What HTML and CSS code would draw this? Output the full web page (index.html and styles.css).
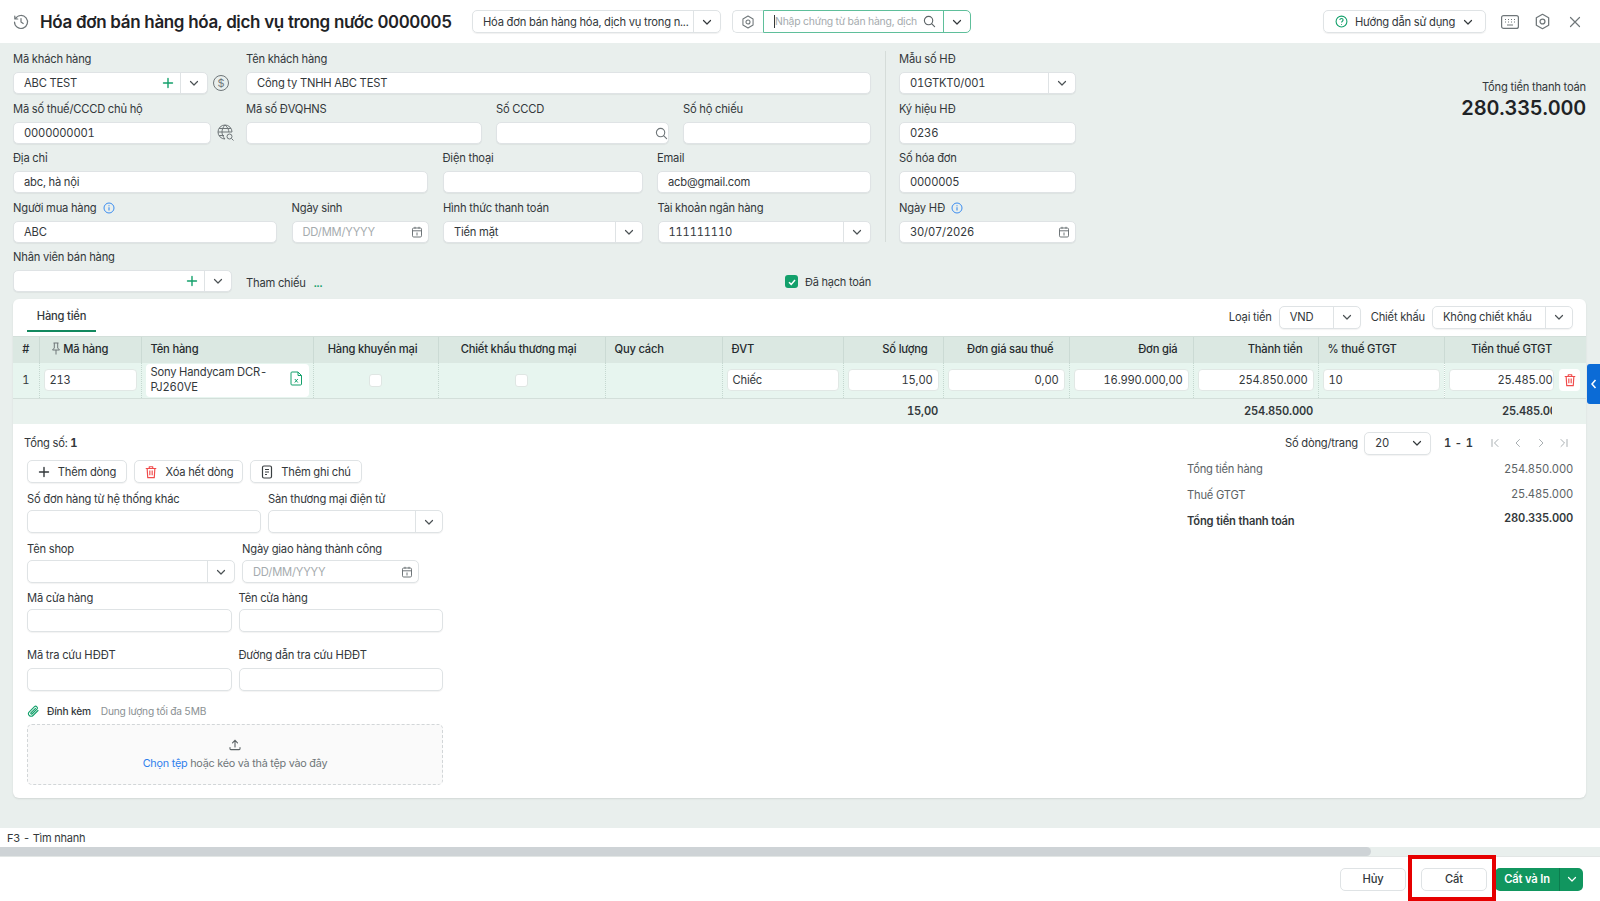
FILE: index.html
```html
<!DOCTYPE html>
<html lang="vi">
<head>
    <meta charset="UTF-8">
    <meta name="viewport" content="width=device-width, initial-scale=1.0">
    <title>Hóa đơn bán hàng hóa, dịch vụ trong nước 0000005</title>
    <link rel="stylesheet" href="styles.css">
</head>
<body>
    <svg class="sprite" xmlns="http://www.w3.org/2000/svg">
        <symbol id="i-chev" viewBox="0 0 12 12"><path d="M2.500 4.500 6 8l3.500-3.500" fill="none" stroke="currentColor" stroke-width="1.200" stroke-linecap="round" stroke-linejoin="round"/></symbol>
        <symbol id="i-plus" viewBox="0 0 12 12"><path d="M6 1.500v9M1.500 6h9" fill="none" stroke="currentColor" stroke-width="1.400" stroke-linecap="round"/></symbol>
        <symbol id="i-search" viewBox="0 0 14 14"><circle cx="6" cy="6" r="4.500" fill="none" stroke="currentColor" stroke-width="1.200"/><path d="m9.500 9.500 3 3" fill="none" stroke="currentColor" stroke-width="1.200" stroke-linecap="round"/></symbol>
        <symbol id="i-gear" viewBox="0 0 16 16"><path d="M8 1.200 13.800 4.500v7L8 14.800 2.200 11.500v-7z" fill="none" stroke="currentColor" stroke-width="1.200" stroke-linejoin="round"/><circle cx="8" cy="8" r="2.300" fill="none" stroke="currentColor" stroke-width="1.200"/></symbol>
        <symbol id="i-cal" viewBox="0 0 12 12"><rect x="1.500" y="2" width="9" height="9" rx="1.200" fill="none" stroke="currentColor"/><path d="M1.500 4.800h9M4 .8v2M8 .8v2M6 6.500v3" fill="none" stroke="currentColor"/></symbol>
        <symbol id="i-info" viewBox="0 0 12 12"><circle cx="6" cy="6" r="5" fill="none" stroke="currentColor"/><path d="M6 5.300v3.200M6 3.200v1" fill="none" stroke="currentColor" stroke-width="1.100"/></symbol>
        <symbol id="i-trash" viewBox="0 0 12 12"><path d="M1.500 3h9M4.500 3V1.500h3V3M2.700 3l.5 7.800h5.600l.5-7.800M5 4.800v4M7 4.800v4" fill="none" stroke="currentColor" stroke-linejoin="round"/></symbol>
    </svg>

    <div class="loading-bar"></div>

    <header class="topbar">
        <svg class="history" width="16" height="16" viewBox="0 0 16 16"><path d="M2.500 4.500A6.500 6.500 0 1 1 1.500 8M1.800 2v3h3M8 4.500V8l2.200 1.500" fill="none" stroke="#6f7679" stroke-width="1.200" stroke-linecap="round" stroke-linejoin="round"/></svg>
        <h1>Hóa đơn bán hàng hóa, dịch vụ trong nước 0000005</h1>
        <div class="box type-select">
            <span class="box-text">Hóa đơn bán hàng hóa, dịch vụ trong n...</span>
            <span class="box-arrow"><svg width="12" height="12"><use href="#i-chev"/></svg></span>
        </div>
        <div class="search-group">
            <span class="search-gear"><svg width="14" height="14"><use href="#i-gear"/></svg></span>
            <div class="search-box">
                <span class="caret"></span>
                <span class="search-text">Nhập chứng từ bán hàng, dịch</span>
                <svg class="search-icon" width="13" height="13"><use href="#i-search"/></svg>
                <span class="search-arrow"><svg width="12" height="12"><use href="#i-chev"/></svg></span>
            </div>
        </div>
        <div class="top-right">
            <div class="help-btn">
                <svg width="13" height="13" viewBox="0 0 12 12"><circle cx="6" cy="6" r="5" fill="none" stroke="#13a06b"/><path d="M4.500 4.700C4.500 3.700 5.200 3.200 6 3.200s1.500.5 1.500 1.400C7.500 5.700 6 5.800 6 7M6 8.200v.8" fill="none" stroke="#13a06b"/></svg>
                <span>Hướng dẫn sử dụng</span>
                <svg width="12" height="12"><use href="#i-chev"/></svg>
            </div>
            <svg class="tool" width="18" height="14" viewBox="0 0 18 14"><rect x=".6" y=".6" width="16.800" height="12.800" rx="2" fill="none" stroke="#6f7679" stroke-width="1.200"/><path d="M4 4.500h1M7 4.500h1M10 4.500h1M13 4.500h1M4 7h1M7 7h1M10 7h1M13 7h1M6 10h6" stroke="#6f7679"/></svg>
            <svg class="tool tool-gear" width="17" height="17"><use href="#i-gear"/></svg>
            <svg class="tool" width="12" height="12" viewBox="0 0 12 12"><path d="m1.500 1.500 9 9M10.500 1.500l-9 9" stroke="#6f7679" stroke-width="1.200" stroke-linecap="round"/></svg>
        </div>
    </header>

    <main class="content">
        <section class="form-top">
            <div class="form-left">
                <div class="row row-1">
                    <div class="field">
                        <label>Mã khách hàng</label>
                        <div class="with-icon">
                            <div class="input input-grow">
                                <span class="val">ABC TEST</span>
                                <svg class="add" width="12" height="12"><use href="#i-plus"/></svg>
                                <span class="arrow"><svg width="12" height="12"><use href="#i-chev"/></svg></span>
                            </div>
                            <span class="dollar">$</span>
                        </div>
                    </div>
                    <div class="field">
                        <label>Tên khách hàng</label>
                        <div class="input"><span class="val">Công ty TNHH ABC TEST</span></div>
                    </div>
                </div>
                <div class="row row-2">
                    <div class="field">
                        <label>Mã số thuế/CCCD chủ hộ</label>
                        <div class="with-icon">
                            <div class="input input-grow"><span class="val">0000000001</span></div>
                            <svg class="globe" width="18" height="18" viewBox="0 0 18 18"><path d="M8 15A7 7 0 1 1 15 8M1 8h14M8 1c-4 4-4 10 0 14M8 1c3 2.500 3.800 5 3.800 7M2 4.500h12M2 11.500h5" fill="none" stroke="#6f7679"/><circle cx="12.500" cy="12.500" r="2.500" fill="none" stroke="#6f7679"/><path d="m14.500 14.500 2 2" stroke="#6f7679"/></svg>
                        </div>
                    </div>
                    <div class="field">
                        <label>Mã số ĐVQHNS</label>
                        <div class="input"></div>
                    </div>
                    <div class="field">
                        <label>Số CCCD</label>
                        <div class="input input-end"><svg class="muted-icon cccd-search" width="13" height="13"><use href="#i-search"/></svg></div>
                    </div>
                    <div class="field">
                        <label>Số hộ chiếu</label>
                        <div class="input"></div>
                    </div>
                </div>
                <div class="row row-3">
                    <div class="field">
                        <label>Địa chỉ</label>
                        <div class="input"><span class="val">abc, hà nội</span></div>
                    </div>
                    <div class="field">
                        <label>Điện thoại</label>
                        <div class="input"></div>
                    </div>
                    <div class="field">
                        <label>Email</label>
                        <div class="input"><span class="val">acb@gmail.com</span></div>
                    </div>
                </div>
                <div class="row row-4">
                    <div class="field">
                        <label>Người mua hàng <svg class="info" width="12" height="12"><use href="#i-info"/></svg></label>
                        <div class="input"><span class="val">ABC</span></div>
                    </div>
                    <div class="field">
                        <label>Ngày sinh</label>
                        <div class="input">
                            <span class="val placeholder">DD/MM/YYYY</span>
                            <svg class="muted-icon" width="12" height="12"><use href="#i-cal"/></svg>
                        </div>
                    </div>
                    <div class="field">
                        <label>Hình thức thanh toán</label>
                        <div class="input">
                            <span class="val">Tiền mặt</span>
                            <span class="arrow"><svg width="12" height="12"><use href="#i-chev"/></svg></span>
                        </div>
                    </div>
                    <div class="field">
                        <label>Tài khoản ngân hàng</label>
                        <div class="input">
                            <span class="val">111111110</span>
                            <span class="arrow"><svg width="12" height="12"><use href="#i-chev"/></svg></span>
                        </div>
                    </div>
                </div>
                <div class="row row-5">
                    <div class="field">
                        <label>Nhân viên bán hàng</label>
                        <div class="input">
                            <span class="val"></span>
                            <svg class="add" width="12" height="12"><use href="#i-plus"/></svg>
                            <span class="arrow"><svg width="12" height="12"><use href="#i-chev"/></svg></span>
                        </div>
                    </div>
                    <div class="ref">
                        <span>Tham chiếu</span>
                        <span class="ref-dots">...</span>
                    </div>
                    <div class="posted">
                        <span class="check-on"><svg width="10" height="10" viewBox="0 0 10 10"><path d="m2 5.200 2.200 2.200L8 3" fill="none" stroke="#fff" stroke-width="1.500"/></svg></span>
                        <span>Đã hạch toán</span>
                    </div>
                </div>
            </div>

            <div class="form-divider"></div>

            <div class="form-right">
                <div class="field">
                    <label>Mẫu số HĐ</label>
                    <div class="input">
                        <span class="val">01GTKT0/001</span>
                        <span class="arrow"><svg width="12" height="12"><use href="#i-chev"/></svg></span>
                    </div>
                </div>
                <div class="field">
                    <label>Ký hiệu HĐ</label>
                    <div class="input"><span class="val">0236</span></div>
                </div>
                <div class="field">
                    <label>Số hóa đơn</label>
                    <div class="input"><span class="val">0000005</span></div>
                </div>
                <div class="field">
                    <label>Ngày HĐ <svg class="info" width="12" height="12"><use href="#i-info"/></svg></label>
                    <div class="input">
                        <span class="val">30/07/2026</span>
                        <svg class="muted-icon" width="12" height="12"><use href="#i-cal"/></svg>
                    </div>
                </div>
            </div>

            <div class="grand-total">
                <div class="grand-label">Tổng tiền thanh toán</div>
                <div class="grand-value">280.335.000</div>
            </div>
        </section>

        <section class="card">
            <div class="tabs-row">
                <div class="tab">Hàng tiền</div>
                <div class="tab-tools">
                    <span class="tool-label">Loại tiền</span>
                    <div class="input select-vnd">
                        <span class="val">VND</span>
                        <span class="arrow"><svg width="12" height="12"><use href="#i-chev"/></svg></span>
                    </div>
                    <span class="tool-label">Chiết khấu</span>
                    <div class="input select-discount">
                        <span class="val">Không chiết khấu</span>
                        <span class="arrow"><svg width="12" height="12"><use href="#i-chev"/></svg></span>
                    </div>
                </div>
            </div>

            <table class="grid">
                <colgroup>
                    <col class="c-no"><col class="c-code"><col class="c-name"><col class="c-promo"><col class="c-disc">
                    <col class="c-spec"><col class="c-unit"><col class="c-qty"><col class="c-after"><col class="c-price">
                    <col class="c-amount"><col class="c-rate"><col class="c-tax">
                </colgroup>
                <thead>
                    <tr>
                        <th class="center">#</th>
                        <th class="code-head"><svg width="10" height="13" viewBox="0 0 10 13"><path d="M2.500 1h5M3.300 1v5L1.500 8h7L6.700 6V1M5 8v4.500" fill="none" stroke="#6f7679"/></svg> Mã hàng</th>
                        <th>Tên hàng</th>
                        <th class="center check-head">Hàng khuyến mại</th>
                        <th class="center check-head">Chiết khấu thương mại</th>
                        <th>Quy cách</th>
                        <th>ĐVT</th>
                        <th class="right">Số lượng</th>
                        <th class="right">Đơn giá sau thuế</th>
                        <th class="right">Đơn giá</th>
                        <th class="right">Thành tiền</th>
                        <th>% thuế GTGT</th>
                        <th class="right tax-head">Tiền thuế GTGT</th>
                    </tr>
                </thead>
                <tbody>
                    <tr>
                        <td class="center">1</td>
                        <td><div class="cell-input">213</div></td>
                        <td class="name-cell">
                            <div class="name-box">
                                <span>Sony Handycam DCR-PJ260VE</span>
                                <svg width="13" height="15" viewBox="0 0 13 15"><path d="M2 1h6l3.500 3.500V13a1 1 0 0 1-1 1H2a1 1 0 0 1-1-1V2a1 1 0 0 1 1-1zM8 1v3.500h3.500M4.800 8l3 3.500M7.800 8l-3 3.500" fill="none" stroke="#13a06b"/></svg>
                            </div>
                        </td>
                        <td class="center"><span class="check-off"></span></td>
                        <td class="center"><span class="check-off"></span></td>
                        <td></td>
                        <td><div class="cell-input">Chiếc</div></td>
                        <td><div class="cell-input num">15,00</div></td>
                        <td><div class="cell-input num">0,00</div></td>
                        <td><div class="cell-input num">16.990.000,00</div></td>
                        <td><div class="cell-input num">254.850.000</div></td>
                        <td><div class="cell-input">10</div></td>
                        <td class="tax-cell">
                            <div class="cell-input num">25.485.00</div>
                            <span class="del-btn"><svg width="14" height="14"><use href="#i-trash"/></svg></span>
                        </td>
                    </tr>
                </tbody>
                <tfoot>
                    <tr>
                        <td colspan="7"></td>
                        <td class="right">15,00</td>
                        <td colspan="2"></td>
                        <td class="right">254.850.000</td>
                        <td></td>
                        <td class="right tax-head"><span class="clip">25.485.000</span></td>
                    </tr>
                </tfoot>
            </table>

            <div class="pager-row">
                <div>Tổng số: <b>1</b></div>
                <div class="pager">
                    <span>Số dòng/trang</span>
                    <div class="input page-size">
                        <span class="val">20</span>
                        <svg width="12" height="12"><use href="#i-chev"/></svg>
                    </div>
                    <b class="page-count">1 - 1</b>
                    <svg class="page-nav" width="10" height="10" viewBox="0 0 10 10"><path d="M2 1.500v7M8 1.500 4.500 5 8 8.500" fill="none" stroke="#a9afb2" stroke-linecap="round"/></svg>
                    <svg class="page-nav" width="10" height="10" viewBox="0 0 10 10"><path d="M6.500 1.500 3 5l3.500 3.500" fill="none" stroke="#a9afb2" stroke-linecap="round"/></svg>
                    <svg class="page-nav" width="10" height="10" viewBox="0 0 10 10"><path d="M3.500 1.500 7 5 3.500 8.500" fill="none" stroke="#a9afb2" stroke-linecap="round"/></svg>
                    <svg class="page-nav" width="10" height="10" viewBox="0 0 10 10"><path d="M8 1.500v7M2 1.500 5.500 5 2 8.500" fill="none" stroke="#a9afb2" stroke-linecap="round"/></svg>
                </div>
            </div>

            <div class="card-body">
                <div class="extra">
                    <div class="actions">
                        <button class="act act-add"><svg width="12" height="12"><use href="#i-plus"/></svg>Thêm dòng</button>
                        <button class="act act-clear"><svg class="red" width="14" height="14"><use href="#i-trash"/></svg>Xóa hết dòng</button>
                        <button class="act act-note"><svg width="12" height="14" viewBox="0 0 12 14"><rect x="1.500" y="1" width="9" height="12" rx="1.500" fill="none" stroke="#3a3f42" stroke-width="1.200"/><path d="M4 4.500h4M4 7h4M4 9.500h2" stroke="#3a3f42"/></svg>Thêm ghi chú</button>
                    </div>
                    <div class="extra-row er-1">
                        <div class="field">
                            <label>Số đơn hàng từ hệ thống khác</label>
                            <div class="input input-lg"></div>
                        </div>
                        <div class="field">
                            <label>Sàn thương mại điện tử</label>
                            <div class="input input-lg">
                                <span class="val"></span>
                                <span class="arrow"><svg width="12" height="12"><use href="#i-chev"/></svg></span>
                            </div>
                        </div>
                    </div>
                    <div class="extra-row er-2">
                        <div class="field">
                            <label>Tên shop</label>
                            <div class="input input-lg">
                                <span class="val"></span>
                                <span class="arrow"><svg width="12" height="12"><use href="#i-chev"/></svg></span>
                            </div>
                        </div>
                        <div class="field">
                            <label>Ngày giao hàng thành công</label>
                            <div class="input input-lg">
                                <span class="val placeholder">DD/MM/YYYY</span>
                                <svg class="muted-icon" width="12" height="12"><use href="#i-cal"/></svg>
                            </div>
                        </div>
                    </div>
                    <div class="extra-row er-3">
                        <div class="field">
                            <label>Mã cửa hàng</label>
                            <div class="input input-lg"></div>
                        </div>
                        <div class="field">
                            <label>Tên cửa hàng</label>
                            <div class="input input-lg"></div>
                        </div>
                    </div>
                    <div class="extra-row er-3 er-4">
                        <div class="field">
                            <label>Mã tra cứu HĐĐT</label>
                            <div class="input input-lg"></div>
                        </div>
                        <div class="field">
                            <label>Đường dẫn tra cứu HĐĐT</label>
                            <div class="input input-lg"></div>
                        </div>
                    </div>
                    <div class="attach-head">
                        <svg width="13" height="13" viewBox="0 0 13 13"><path d="M11 5.500 6 10.500a2.600 2.600 0 0 1-3.700-3.700L7.500 1.700a1.700 1.700 0 0 1 2.400 2.400L5 9a.8.8 0 0 1-1.100-1.100L8.500 3.300" fill="none" stroke="#13a06b" stroke-width="1.100" stroke-linecap="round"/></svg>
                        <span class="attach-title">Đính kèm</span>
                        <span class="attach-note">Dung lượng tối đa 5MB</span>
                    </div>
                    <div class="dropzone">
                        <svg width="12" height="12" viewBox="0 0 12 12"><path d="M6 8V1.500M3.500 3.800 6 1.300l2.500 2.500M1 8.500v1.300c0 .5.300.8.800.8h8.400c.5 0 .8-.3.800-.8V8.500" fill="none" stroke="#5c6366" stroke-width="1.100" stroke-linecap="round"/></svg>
                        <div><span class="link">Chọn tệp</span> hoặc kéo và thả tệp vào đây</div>
                    </div>
                </div>
                <div class="summary">
                    <div class="sum-row"><span>Tổng tiền hàng</span><span>254.850.000</span></div>
                    <div class="sum-row"><span>Thuế GTGT</span><span class="up-1">25.485.000</span></div>
                    <div class="sum-row sum-total"><span>Tổng tiền thanh toán</span><span class="up-2">280.335.000</span></div>
                </div>
            </div>
        </section>

        <div class="side-handle"><svg width="8" height="12" viewBox="0 0 8 12"><path d="M5.500 2 2 6l3.500 4" fill="none" stroke="#fff" stroke-width="1.500"/></svg></div>
    </main>

    <div class="hint">F3 - Tìm nhanh</div>
    <div class="hscroll"><div class="hscroll-thumb"></div></div>

    <footer class="bottombar">
        <button class="foot-btn">Hủy</button>
        <button class="foot-btn">Cất</button>
        <div class="split-btn">
            <span class="split-main">Cất và In</span>
            <span class="split-arrow"><svg width="12" height="12"><use href="#i-chev"/></svg></span>
        </div>
    </footer>

    <div class="highlight"></div>
</body>
</html>
```

FILE: styles.css
```css
* {
    margin: 0;
    padding: 0;
    box-sizing: border-box;
}

body {
    font-family: Inter, "Noto Sans", sans-serif;
    font-size: 11.2px;
    letter-spacing: -0.2px;
    font-variant-numeric: tabular-nums;
    color: #33383b;
    background: #fff;
    height: 100vh;
    display: flex;
    flex-direction: column;
    overflow: hidden;
    position: relative;
}

.sprite {
    display: none;
}

.loading-bar {
    position: absolute;
    top: 0;
    left: 467px;
    width: 667px;
    height: 2px;
    background: #e4e6e6;
}

/* top bar */
.topbar {
    height: 43px;
    flex: none;
    display: flex;
    align-items: center;
    padding: 0 0 0 13px;
    background: #fff;
    box-shadow: 0 1px 3px rgba(0, 0, 0, 0.1);
    position: relative;
}

.history {
    margin-right: 11px;
}

h1 {
    font-size: 17px;
    letter-spacing: -0.38px;
    font-weight: 600;
    color: #1f2326;
    white-space: nowrap;
    width: 432px;
}

.box {
    height: 23px;
    border: 1px solid #dfe3e5;
    border-radius: 5px;
    display: flex;
    align-items: center;
    box-shadow: 0 1px 1px rgba(0, 0, 0, 0.06);
}

.type-select {
    width: 249px;
}

.box-text {
    flex: 1;
    padding-left: 10px;
    white-space: nowrap;
}

.box-arrow {
    width: 27px;
    height: 100%;
    border-left: 1px solid #dfe3e5;
    display: flex;
    align-items: center;
    justify-content: center;
}

.search-group {
    margin-left: 11px;
    display: flex;
    height: 23px;
}

.search-gear {
    width: 31px;
    border: 1px solid #dfe3e5;
    border-right: none;
    border-radius: 5px 0 0 5px;
    display: flex;
    align-items: center;
    justify-content: center;
    color: #6f7679;
}

.search-box {
    width: 208px;
    border: 1px solid #5fbf9b;
    border-radius: 0 5px 5px 0;
    display: flex;
    align-items: center;
    padding-left: 10px;
    position: relative;
}

.caret {
    width: 1px;
    height: 13px;
    background: #33383b;
}

.search-text {
    color: #a5abae;
    font-size: 10.4px;
    flex: 1;
    white-space: nowrap;
}

.search-icon {
    color: #5c6366;
    margin: 0 7px 0 0;
    flex: none;
}

.search-arrow {
    width: 27px;
    height: 100%;
    flex: none;
    border-left: 1px solid #5fbf9b;
    display: flex;
    align-items: center;
    justify-content: center;
}

.top-right {
    margin-left: auto;
    display: flex;
    align-items: center;
}

.help-btn {
    width: 163px;
    height: 23px;
    border: 1px solid #dfe3e5;
    border-radius: 5px;
    box-shadow: 0 1px 1px rgba(0, 0, 0, 0.06);
    display: flex;
    align-items: center;
    padding-left: 11px;
    gap: 7px;
    margin-right: 15px;
    white-space: nowrap;
}

.tool {
    color: #6f7679;
    margin-right: 15px;
}

.tool-gear {
    margin-right: 18px;
}

.tool:last-child {
    margin-right: 19px;
}

/* main form */
.content {
    flex: 1;
    background: #e9efed;
    padding: 8px 14px 0 13px;
    position: relative;
}

.form-top {
    display: flex;
}

.form-left {
    width: 858px;
    display: flex;
    flex-direction: column;
    gap: 6.5px;
}

.row {
    display: grid;
    column-gap: 14px;
}

.row-1 {
    grid-template-columns: 219px 1fr;
}

.row-2 {
    grid-template-columns: 219px 236px 173px 1fr;
}

.row-3 {
    grid-template-columns: 415px 200px 1fr;
    column-gap: 14.5px;
}

.row-4 {
    grid-template-columns: 264px 137px 200px 1fr;
    column-gap: 14.5px;
}

.row-5 {
    grid-template-columns: 219px 1fr auto;
}

.field label {
    display: flex;
    align-items: center;
    gap: 6px;
    height: 16px;
    margin-bottom: 5px;
    white-space: nowrap;
}

.info {
    color: #3b8df0;
}

.input {
    height: 22px;
    background: #fff;
    border: 1px solid #dfe3e5;
    border-radius: 5px;
    box-shadow: 0 1px 1px rgba(0, 0, 0, 0.05);
    display: flex;
    align-items: center;
}

.val {
    flex: 1;
    padding-left: 10px;
    white-space: nowrap;
    overflow: hidden;
}

.placeholder {
    color: #a5abae;
}

.add {
    color: #13a06b;
    margin-right: 6px;
    flex: none;
}

.arrow {
    width: 27px;
    height: 100%;
    flex: none;
    border-left: 1px solid #dfe3e5;
    display: flex;
    align-items: center;
    justify-content: center;
    color: #4b5154;
}

.muted-icon {
    color: #6f7679;
    margin-right: 5px;
    flex: none;
}

.cccd-search {
    margin: 2px 0 0;
}

.input-end {
    justify-content: flex-end;
}

.with-icon {
    display: flex;
    align-items: center;
}

.input-grow {
    flex: 1;
}

.dollar {
    width: 16px;
    height: 16px;
    margin: 0 3px 0 5px;
    border: 1px solid #6f7679;
    border-radius: 50%;
    font-size: 11px;
    line-height: 14px;
    text-align: center;
    color: #6f7679;
}

.row-2 .input-grow {
    margin-right: 6px;
}

.globe {
    flex: none;
    margin-right: -3px;
}

.ref {
    display: flex;
    align-items: center;
    padding-top: 24px;
}

.ref-dots {
    margin-left: 8px;
    color: #13a06b;
    font-weight: 600;
}

.posted {
    display: flex;
    align-items: center;
    gap: 7px;
    padding-top: 22px;
    font-size: 11px;
}

.check-on {
    width: 13px;
    height: 13px;
    background: #13a06b;
    border-radius: 3px;
    display: flex;
    align-items: center;
    justify-content: center;
}

.form-divider {
    width: 1px;
    height: 191px;
    background: #d5dcd9;
    margin: 0 13px 0 14px;
}

.form-right {
    width: 177px;
    display: flex;
    flex-direction: column;
    gap: 6.5px;
}

.grand-total {
    flex: 1;
    text-align: right;
    padding-top: 29px;
}

.grand-value {
    font-size: 20px;
    font-weight: 600;
    color: #1f2326;
    margin-top: 2px;
}

/* detail card */
.card {
    margin-top: 6.5px;
    height: 499px;
    background: #fff;
    border-radius: 6px;
    box-shadow: 0 1px 2px rgba(0, 0, 0, 0.1);
    overflow: hidden;
}

.tabs-row {
    height: 37px;
    display: flex;
    align-items: flex-start;
    justify-content: space-between;
    padding: 0 13px 0 14px;
}

.tab {
    width: 69px;
    height: 33px;
    line-height: 35px;
    text-align: center;
    border-bottom: 2px solid #13895f;
    font-weight: 500;
}

.tab-tools {
    display: flex;
    align-items: center;
    padding-top: 7px;
}

.tool-label {
    margin-right: 7px;
}

.select-vnd {
    width: 82px;
    height: 23px;
    margin-right: 10px;
}

.select-discount {
    width: 141px;
    height: 23px;
}

.grid {
    width: 1573px;
    border-collapse: collapse;
    table-layout: fixed;
}

.c-no { width: 26px; }
.c-code { width: 102px; }
.c-name { width: 172px; }
.c-promo { width: 125px; }
.c-disc { width: 167px; }
.c-spec { width: 117px; }
.c-unit { width: 121px; }
.c-qty { width: 100px; }
.c-after { width: 126px; }
.c-price { width: 124px; }
.c-amount { width: 125px; }
.c-rate { width: 126px; }
.c-tax { width: 142px; }

.grid th {
    height: 27px;
    background: #dbe8e2;
    font-weight: 500;
    color: #262b2e;
    text-align: left;
    padding: 0 9px 2px;
    border-left: 1px solid #cbdad4;
    border-top: 1px solid #d3dfda;
    white-space: nowrap;
}

.grid th:first-child,
.grid tbody td:first-child {
    border-left: none;
}

.grid th.check-head {
    padding-right: 15px;
}

.grid tbody td {
    height: 35px;
    background: #e7f5ef;
    padding: 0 4px;
    border-left: 1px dotted #c5d8d0;
    border-bottom: 1px solid #d3dfda;
}

.grid tfoot td {
    height: 26px;
    background: #e9f2ee;
    font-weight: 600;
    padding: 0 5px;
}

.grid .center {
    text-align: center;
}

.grid th.right {
    text-align: right;
    padding-right: 15px;
}

.grid td.right {
    text-align: right;
}

.code-head {
    padding-left: 11px !important;
}

.code-head svg {
    vertical-align: -2px;
}

.grid th.tax-head,
.grid td.tax-head {
    padding-right: 34px;
}

.clip {
    display: block;
    width: 50px;
    margin-left: auto;
    overflow: hidden;
    white-space: nowrap;
    text-align: left;
}

.cell-input {
    height: 22px;
    line-height: 20px;
    background: #fff;
    border: 1px solid #e1e8e5;
    border-radius: 4px;
    padding: 0 5px;
    white-space: nowrap;
    overflow: hidden;
}

.cell-input.num {
    text-align: right;
}

.grid .name-cell {
    padding: 0 4px 0 4px;
}

.name-box {
    height: 33px;
    background: #fff;
    border-radius: 4px;
    padding: 0 6px 0 5px;
    display: flex;
    align-items: center;
    justify-content: space-between;
    line-height: 15.5px;
}

.name-box span {
    width: 125px;
}

.name-box svg {
    flex: none;
    margin-top: -4px;
}

.check-off {
    display: inline-block;
    width: 13px;
    height: 13px;
    background: #fff;
    border: 1px solid #dfe6e3;
    border-radius: 3px;
    vertical-align: middle;
}

.tax-cell {
    position: relative;
}

.tax-cell .cell-input {
    width: 105px;
    padding-right: 0;
}

.del-btn {
    position: absolute;
    right: 6px;
    top: 6px;
    width: 21px;
    height: 22px;
    background: #fff;
    border-radius: 4px;
    display: flex;
    align-items: center;
    justify-content: center;
    color: #f04b4b;
}

.pager-row {
    height: 36px;
    display: flex;
    align-items: center;
    justify-content: space-between;
    padding: 2px 17px 0 11px;
}

.pager {
    display: flex;
    align-items: center;
}

.page-size {
    width: 67px;
    height: 23px;
    margin: 0 13px 0 6px;
    padding-right: 7px;
}

.page-count {
    font-weight: 600;
    letter-spacing: 0.3px;
    width: 46px;
}

.page-nav {
    margin-left: 13px;
}

.page-count + .page-nav {
    margin-left: 0;
}

.card-body {
    display: flex;
    justify-content: space-between;
    padding: 0 13px 0 14px;
}

.extra {
    width: 416px;
}

.actions {
    display: flex;
    gap: 7px;
    margin-bottom: 8px;
}

.act {
    height: 23px;
    background: #fff;
    border: 1px solid #dfe3e5;
    border-radius: 5px;
    box-shadow: 0 1px 1px rgba(0, 0, 0, 0.05);
    font: inherit;
    letter-spacing: inherit;
    color: inherit;
    display: flex;
    align-items: center;
    justify-content: center;
    gap: 8px;
}

.act-add {
    width: 100px;
}

.act-clear {
    width: 109px;
}

.act-note {
    width: 112px;
}

.red {
    color: #f04b4b;
}

.extra-row {
    display: flex;
    gap: 7px;
    margin-bottom: 8px;
}

.extra-row label {
    margin-bottom: 3px;
}

.input-lg {
    height: 23px;
}

.er-1 .field:first-child {
    width: 234px;
}

.er-1 .field:last-child {
    width: 175px;
}

.er-2 {
    margin-bottom: 7px;
}

.er-2 .field:first-child {
    width: 208px;
}

.er-2 .field:last-child {
    width: 177px;
}

.er-3 {
    margin-bottom: 15px;
}

.er-3 .field {
    width: 204.5px;
}

.er-4 {
    margin-bottom: 12px;
}

.er-4 label {
    margin-bottom: 5px;
}

.attach-head {
    display: flex;
    align-items: center;
    height: 16px;
    margin-bottom: 5px;
    font-size: 10.2px;
}

.attach-title {
    margin-left: 7px;
    font-weight: 500;
}

.attach-note {
    margin-left: 10px;
    color: #8a9093;
}

.dropzone {
    height: 61px;
    background: #fafafa;
    border: 1px dashed #d2d6d8;
    border-radius: 5px;
    display: flex;
    flex-direction: column;
    align-items: center;
    justify-content: center;
    gap: 6px;
    color: #6f7679;
    font-size: 10.8px;
}

.link {
    color: #2f80ed;
}

.summary {
    width: 386px;
    padding-top: 1px;
}

.sum-row {
    display: flex;
    justify-content: space-between;
    height: 26px;
    line-height: 16px;
    color: #5c6366;
}

.sum-total {
    font-weight: 600;
    color: #33383b;
}

.up-1 {
    margin-top: -1px;
}

.up-2 {
    margin-top: -3px;
}

.side-handle {
    position: absolute;
    right: 0;
    top: 321px;
    width: 13px;
    height: 40px;
    background: #0b6bd6;
    border-radius: 3px 0 0 3px;
    display: flex;
    align-items: center;
    justify-content: center;
}

/* bottom strips */
.hint {
    flex: none;
    height: 19px;
    line-height: 21px;
    padding-left: 7px;
    font-size: 11px;
    background: #fff;
    box-shadow: 0 -1px 1px rgba(0, 0, 0, 0.03);
}

.hscroll {
    flex: none;
    height: 9px;
    background: #e9efed;
}

.hscroll-thumb {
    width: 1371px;
    height: 100%;
    background: #ced3d6;
    border-radius: 0 5px 5px 0;
}

.bottombar {
    flex: none;
    height: 45px;
    background: #fff;
    border-top: 1px solid #e2e6e5;
    display: flex;
    align-items: center;
    justify-content: flex-end;
    padding-right: 17px;
}

.foot-btn {
    width: 66px;
    height: 23px;
    background: #fff;
    border: 1px solid #dfe3e5;
    border-radius: 5px;
    font: inherit;
    letter-spacing: inherit;
    font-weight: 500;
    color: #33383b;
    margin-right: 15px;
}

.foot-btn:nth-child(2) {
    margin-right: 8px;
}

.split-btn {
    width: 88px;
    height: 23px;
    background: #11965f;
    color: #fff;
    font-weight: 600;
    border-radius: 5px;
    display: flex;
    align-items: center;
}

.split-main {
    flex: 1;
    text-align: center;
    white-space: nowrap;
}

.split-arrow {
    width: 24px;
    height: 100%;
    border-left: 1px solid #0c7c4e;
    display: flex;
    align-items: center;
    justify-content: center;
}

.highlight {
    position: absolute;
    left: 1408px;
    top: 855px;
    width: 88px;
    height: 46px;
    border: 4px solid #e60000;
}
```
